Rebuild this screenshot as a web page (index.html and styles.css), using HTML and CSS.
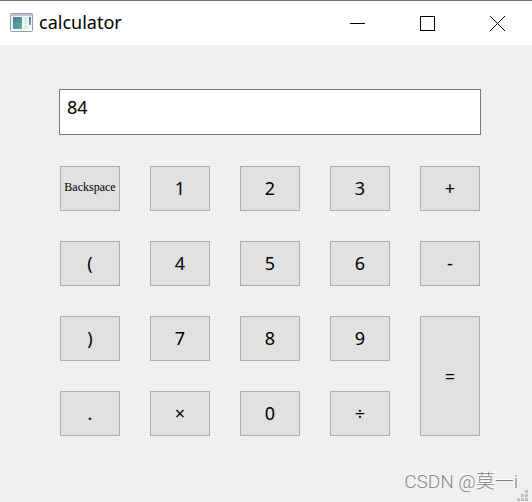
FILE: index.html
```html
<!DOCTYPE html>
<html lang="zh-CN">
<head>
  <meta charset="UTF-8">
  <meta name="viewport" content="width=device-width, initial-scale=1.0">
  <title>calculator</title>
  <link rel="stylesheet" href="styles.css">
</head>
<body>
  <header class="titlebar">
    <svg class="app-icon" width="24" height="20" viewBox="0 0 24 20" aria-hidden="true">
      <defs>
        <linearGradient id="pane" x1="0" y1="0" x2="1" y2="1">
          <stop offset="0" stop-color="#3f78a8"/>
          <stop offset="1" stop-color="#5fb583"/>
        </linearGradient>
        <linearGradient id="bar" x1="0" y1="0" x2="0" y2="1">
          <stop offset="0" stop-color="#4a78b8"/>
          <stop offset="1" stop-color="#69b890"/>
        </linearGradient>
      </defs>
      <rect x="0.5" y="0.5" width="22" height="18" rx="1" fill="#f7f8f9" stroke="#989ea5"/>
      <rect x="1" y="1" width="21" height="2" fill="#c3c8cf"/>
      <rect x="3" y="4" width="9" height="12" fill="url(#pane)"/>
      <rect x="14" y="4" width="4" height="7" fill="#e6e8e9"/>
      <rect x="14" y="12" width="4" height="4" fill="#e6e8e9"/>
      <rect x="19" y="4" width="2" height="8" fill="url(#bar)"/>
    </svg>
    <h1 class="title">calculator</h1>
    <div class="window-buttons">
      <button type="button" class="window-button" aria-label="Minimize">
        <svg width="15" height="15" viewBox="0 0 15 15"><path d="M0 7.5h15" stroke="#000"/></svg>
      </button>
      <button type="button" class="window-button" aria-label="Maximize">
        <svg width="15" height="15" viewBox="0 0 15 15"><rect x="0.5" y="0.5" width="14" height="14" fill="none" stroke="#000"/></svg>
      </button>
      <button type="button" class="window-button" aria-label="Close">
        <svg width="15" height="15" viewBox="0 0 15 15"><path d="M0 0l15 15M15 0L0 15" stroke="#000"/></svg>
      </button>
    </div>
  </header>

  <main class="calculator">
    <input type="text" class="display" value="84" aria-label="Expression">
    <div class="keys">
      <button type="button" class="key backspace">Backspace</button>
      <button type="button" class="key">1</button>
      <button type="button" class="key">2</button>
      <button type="button" class="key">3</button>
      <button type="button" class="key">+</button>

      <button type="button" class="key">(</button>
      <button type="button" class="key">4</button>
      <button type="button" class="key">5</button>
      <button type="button" class="key">6</button>
      <button type="button" class="key">-</button>

      <button type="button" class="key">)</button>
      <button type="button" class="key">7</button>
      <button type="button" class="key">8</button>
      <button type="button" class="key">9</button>
      <button type="button" class="key equals">=</button>

      <button type="button" class="key">.</button>
      <button type="button" class="key">×</button>
      <button type="button" class="key">0</button>
      <button type="button" class="key">÷</button>
    </div>
  </main>

  <footer class="footer">
    <span class="watermark">CSDN @莫一i</span>
    <svg class="grip" width="11" height="11" viewBox="0 0 11 11" fill="#bfbfbf" aria-hidden="true">
      <path d="M8 0h3v3h-3zM4 4h3v3h-3zM8 4h3v3h-3zM0 8h3v3h-3zM4 8h3v3h-3zM8 8h3v3h-3z"/>
    </svg>
  </footer>
</body>
</html>
```

FILE: styles.css
```css
* {
  box-sizing: border-box;
}

body {
  margin: 0;
  min-height: 100vh;
  display: flex;
  flex-direction: column;
  background-color: #f0f0f0;
  color: #000;
  font-family: "Noto Sans", "Noto Sans CJK SC", sans-serif;
  font-size: 18px;
}

/* Title bar */
.titlebar {
  display: flex;
  align-items: center;
  height: 45px;
  padding-left: 10px;
  border-top: 1px solid #6f6f6f;
  background-color: #fff;
}

.title {
  flex: 1;
  margin: 0 0 2px 5px;
  font-size: 18px;
  font-weight: normal;
}

.window-buttons {
  display: flex;
  align-self: stretch;
}

.window-button {
  display: flex;
  justify-content: center;
  align-items: center;
  width: 70px;
  padding: 0;
  border: none;
  background: none;
}

/* Display and keys */
.calculator {
  display: flex;
  flex-direction: column;
  gap: 30px;
  padding: 44px 51px 0 59px;
}

.display {
  width: 100%;
  height: 46px;
  padding: 0 7px 10px;
  border: 1px solid #7a7a7a;
  border-radius: 0;
  background-color: #fff;
  color: #000;
  font: inherit;
}

.keys {
  display: grid;
  grid-template-columns: repeat(5, minmax(0, 1fr));
  grid-auto-rows: 45px;
  gap: 30px;
  padding: 1px;
}

.key {
  padding: 0 0 2px;
  border: 1px solid #adadad;
  background-color: #e1e1e1;
  color: #000;
  font: inherit;
}

.backspace {
  font-family: "Liberation Serif", serif;
  font-size: 12px;
}

.equals {
  grid-row: span 2;
  padding: 0;
}

/* Watermark and resize grip */
.footer {
  flex: 1;
  display: flex;
  justify-content: flex-end;
  align-items: flex-end;
  padding: 0 14px 6px 0;
}

.watermark {
  color: #858585;
  font-family: Roboto, "Noto Sans CJK SC", sans-serif;
  font-size: 19px;
  font-weight: 300;
  line-height: 28px;
  text-shadow: -1px -1px 0 #fff;
}

.grip {
  position: absolute;
  right: 4px;
  bottom: 1px;
}
```
